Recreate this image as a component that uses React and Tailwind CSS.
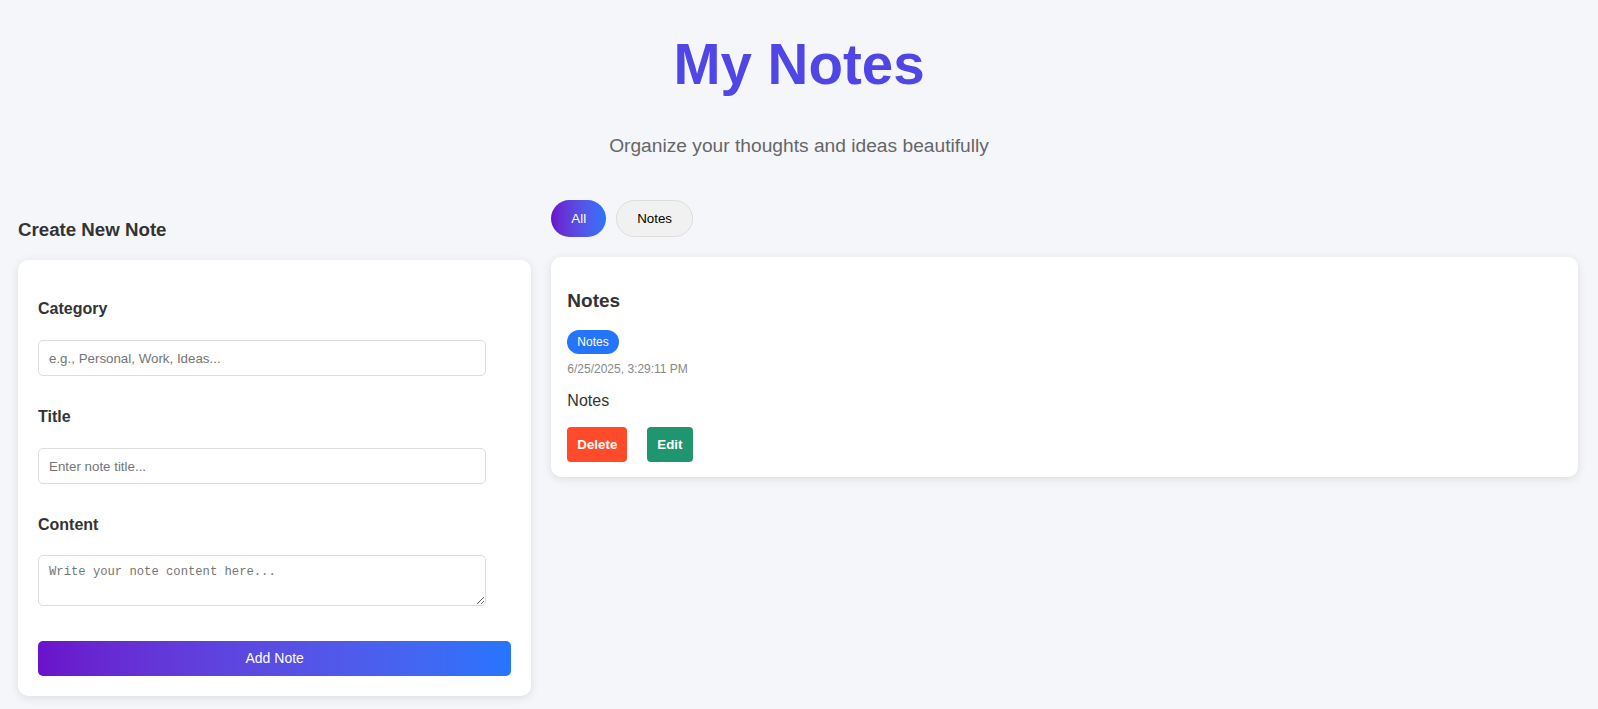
export default function App() {
  return (
    <div className="min-h-screen bg-[#f5f6fa] font-['Liberation_Sans',Arial,sans-serif]">
      <header className="pt-[32px] text-center">
        <h1 className="text-[56.5px] leading-[66px] font-bold text-[#4f46e5]">My Notes</h1>
        <p className="mt-[37px] text-[19.2px] leading-[22px] text-[#666666]">
          Organize your thoughts and ideas beautifully
        </p>
      </header>

      <main className="mt-[43px] grid grid-cols-[1fr_2fr] items-start gap-5 pl-[18px] pr-5 pb-[13px]">
        <section>
          <h2 className="mt-[19px] text-[18.7px] leading-[22px] font-bold text-[#333333]">Create New Note</h2>
          <div className="mt-[19px] rounded-[10px] bg-white px-5 pt-10 pb-5 shadow-[0_2px_10px_rgba(0,0,0,0.1)]">
            <label className="block text-[16px] leading-[18px] font-bold text-[#333333]">Category</label>
            <input
              type="text"
              placeholder="e.g., Personal, Work, Ideas..."
              className="mt-[22px] block h-9 w-[94.6%] rounded-[5px] border border-[#dddddd] px-[10px] text-[13.33px] text-[#333] placeholder:text-[#757575] outline-none"
            />
            <label className="mt-[32px] block text-[16px] leading-[18px] font-bold text-[#333333]">Title</label>
            <input
              type="text"
              placeholder="Enter note title..."
              className="mt-[22px] block h-9 w-[94.6%] rounded-[5px] border border-[#dddddd] px-[10px] text-[13.33px] text-[#333] placeholder:text-[#757575] outline-none"
            />
            <label className="mt-[32px] block text-[16px] leading-[18px] font-bold text-[#333333]">Content</label>
            <textarea
              placeholder="Write your note content here..."
              className="mt-[21px] block h-[51px] w-[94.6%] rounded-[5px] border border-[#dddddd] px-[10px] py-[8px] font-['Liberation_Mono',monospace] text-[12.2px] leading-[16px] text-[#333] placeholder:text-[#757575] outline-none"
            />
            <button className="mt-[35px] flex h-[35px] w-full items-center justify-center rounded-[5px] bg-gradient-to-r from-[#6a11cb] to-[#2575fc] text-[14px] text-white">
              Add Note
            </button>
          </div>
        </section>

        <section>
          <div className="flex gap-[10px]">
            <button className="flex h-[37px] items-center rounded-full bg-gradient-to-r from-[#6a11cb] to-[#2575fc] px-5 text-[13.33px] text-white">
              All
            </button>
            <button className="flex h-[37px] items-center rounded-full border border-[#dddddd] bg-[#f1f1f1] px-5 text-[13.33px] text-black">
              Notes
            </button>
          </div>

          <div className="mt-5 rounded-[10px] bg-white px-4 pt-[32px] pb-[15px] shadow-[0_2px_10px_rgba(0,0,0,0.1)]">
            <h3 className="text-[19px] leading-[24px] font-bold text-[#333333]">Notes</h3>
            <div className="mt-4">
              <span className="inline-flex h-6 items-center rounded-full bg-[#2575fc] px-2.5 text-[12px] text-white">
                Notes
              </span>
            </div>
            <div className="mt-2 text-[12px] leading-[14px] text-[#888888]">6/25/2025, 3:29:11 PM</div>
            <p className="mt-4 text-[16px] leading-[18px] text-[#333333]">Notes</p>
            <div className="mt-[17px] flex gap-5">
              <button className="flex h-[35px] items-center rounded-[4px] bg-[#ff4b2b] px-2.5 text-[13.33px] font-bold text-white">
                Delete
              </button>
              <button className="flex h-[35px] items-center rounded-[4px] bg-[#1f9670] px-2.5 text-[13.33px] font-bold text-white">
                Edit
              </button>
            </div>
          </div>
        </section>
      </main>
    </div>
  );
}
